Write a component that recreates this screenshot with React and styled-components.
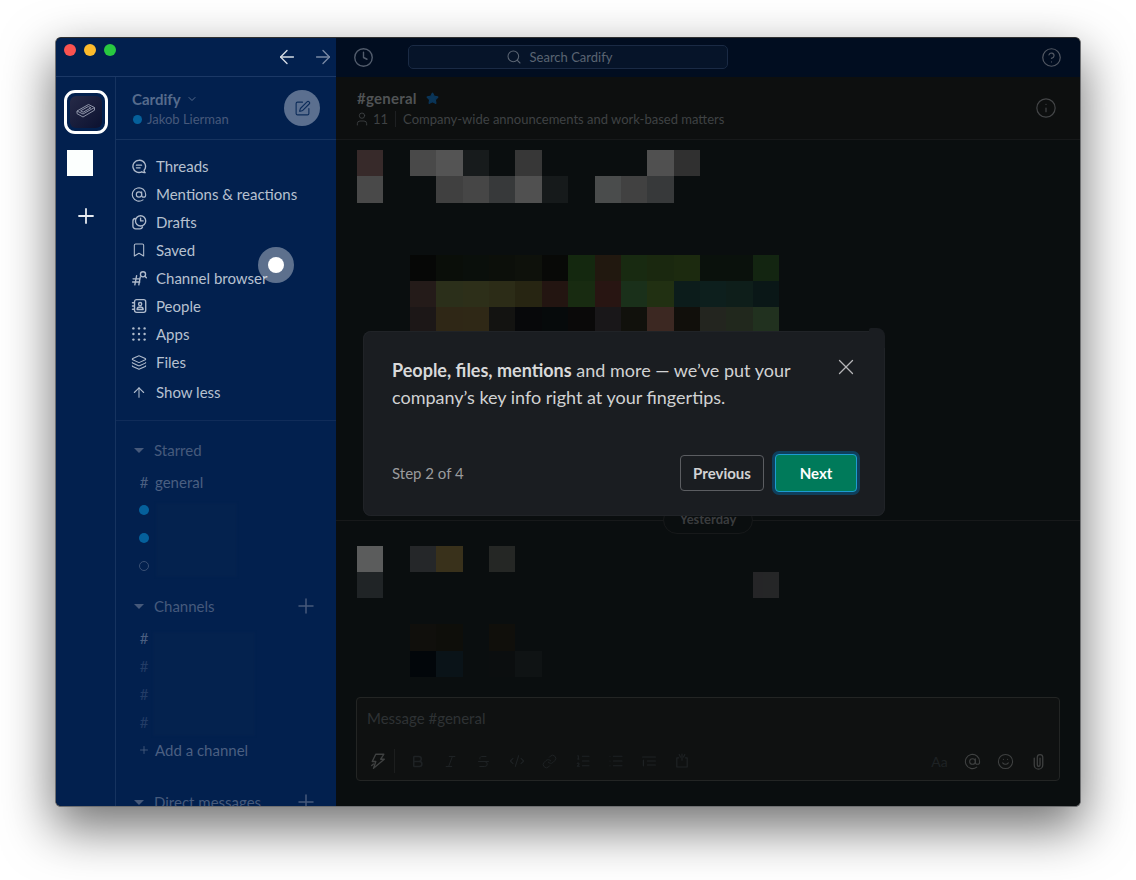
import React from "react";
import styled, { createGlobalStyle } from "styled-components";
import {
  ArrowLeft,
  ArrowRight,
  ArrowUp,
  AtSign,
  Bold,
  Bookmark,
  ChevronDown,
  CircleHelp,
  Clock,
  CodeXml,
  Info,
  Italic,
  Layers,
  Link,
  ListOrdered,
  List,
  Plus,
  Search,
  Smile,
  SquarePen,
  Star,
  Strikethrough,
  User,
  X,
} from "lucide-react";

const GlobalStyle = createGlobalStyle`
  html, body {
    margin: 0;
    background: #ffffff;
  }
  body {
    font-family: Lato, "Open Sans", sans-serif;
    font-feature-settings: "liga", "kern";
  }
`;

function ThreadIcon() {
  return (
    <svg width="17" height="17" viewBox="0 0 20 20" fill="none" stroke="currentColor" strokeWidth="1.7" strokeLinecap="round" strokeLinejoin="round">
      <path d="M10 2.2a7.6 7.6 0 1 0 3.4 14.4c1.1.8 2.5 1.2 4.2 1-.9-.8-1.3-1.8-1.2-3A7.6 7.6 0 0 0 10 2.2z" />
      <path d="M6.8 8.3h6.4M6.8 11.7h4.6" />
    </svg>
  );
}

function DraftsIcon() {
  return (
    <svg width="17" height="17" viewBox="0 0 20 20" fill="none" stroke="currentColor" strokeWidth="1.7" strokeLinecap="round" strokeLinejoin="round">
      <circle cx="12" cy="8" r="6.4" />
      <path d="M12 4.6V8h3.2" />
      <path d="M5.4 5A3.4 3.4 0 0 0 2.4 8.4v6.2a3.4 3.4 0 0 0 3.4 3.4h5.4a3.4 3.4 0 0 0 3.2-2.4" />
    </svg>
  );
}

function BrowserIcon() {
  return (
    <svg width="17" height="17" viewBox="0 0 20 20" fill="none" stroke="currentColor" strokeWidth="1.7" strokeLinecap="round" strokeLinejoin="round">
      <path d="M7 6.5 4.8 18M11.6 8 9.8 18M2.6 10.4h8.2M2 14.4h9" />
      <circle cx="15" cy="4.8" r="3.2" />
      <path d="m17.4 7.2 1.8 1.8" />
    </svg>
  );
}

function PeopleIcon() {
  return (
    <svg width="16" height="16" viewBox="0 0 20 20" fill="none" stroke="currentColor" strokeWidth="1.7" strokeLinecap="round" strokeLinejoin="round">
      <rect x="4.4" y="2" width="14" height="16" rx="2.6" />
      <path d="M1.8 6h2.4M1.8 10h2.4M1.8 14h2.4" />
      <circle cx="11.4" cy="7.6" r="2" />
      <path d="M7.6 14.4c0-2.2 1.6-3.2 3.8-3.2s3.8 1 3.8 3.2z" />
    </svg>
  );
}

function AppsIcon() {
  const spots = [3, 10, 17];
  return (
    <svg width="16" height="16" viewBox="0 0 20 20" fill="currentColor">
      {spots.map((y) =>
        spots.map((x) => <circle key={x + "-" + y} cx={x} cy={y} r="1.5" />)
      )}
    </svg>
  );
}

function BoltIcon() {
  return (
    <svg width="18" height="18" viewBox="0 0 20 20" fill="none" stroke="currentColor" strokeWidth="1.5" strokeLinejoin="round" strokeLinecap="round">
      <path d="M7.5 2.5h9L13 8h4L5 18l2.6-7.4H3.6z" />
      <path d="M3 15l2-1.6" />
    </svg>
  );
}

function IndentIcon() {
  return (
    <svg width="16" height="16" viewBox="0 0 20 20" fill="none" stroke="currentColor" strokeWidth="1.5" strokeLinecap="round">
      <path d="M2 5h16M8 10h10M8 15h10M3 9v7" />
    </svg>
  );
}

function ShortcutIcon() {
  return (
    <svg width="16" height="16" viewBox="0 0 20 20" fill="none" stroke="currentColor" strokeWidth="1.5" strokeLinecap="round" strokeLinejoin="round">
      <path d="M6 6H3.5v11.5h13V6H14" />
      <path d="M10 1.5V9M6.5 2 8 5M13.5 2 12 5" />
    </svg>
  );
}

function ClipIcon() {
  return (
    <svg width="17" height="17" viewBox="0 0 20 20" fill="none" stroke="currentColor" strokeWidth="1.5" strokeLinecap="round">
      <path d="M5 6v8a5 5 0 0 0 10 0V5a3.2 3.2 0 0 0-6.4 0v9a1.6 1.6 0 0 0 3.2 0V6" />
    </svg>
  );
}

function StackLogo() {
  return (
    <svg width="24" height="24" viewBox="0 0 24 24" fill="none" stroke="#8e94a8" strokeWidth="1" strokeLinejoin="round">
      <path d="M3 11 14.5 4.5l6 3L9 14z" />
      <path d="M6.6 10.8 14.3 6.5l2.6 1.3-7.7 4.4z" />
      <path d="M3 11v2.6L9 17l11.5-6.8V7.5" />
    </svg>
  );
}

const Page = styled.div`
  box-sizing: border-box;
  height: 880px;
  padding: 37px 55px;
  overflow: hidden;
`;
const Window = styled.div`
  position: relative;
  box-sizing: border-box;
  display: flex;
  flex-direction: column;
  width: 1026px;
  height: 770px;
  overflow: hidden;
  border: 1px solid #6f7072;
  border-top-color: #303030;
  border-radius: 6px;
  background: #0a0e0f;
  box-shadow: 0 20px 50px 2px rgba(0, 0, 0, 0.55);
`;
const TitleBar = styled.div`
  display: flex;
  flex: 0 0 39px;
`;
const TitleLeft = styled.div`
  box-sizing: border-box;
  display: flex;
  align-items: center;
  width: 280px;
  padding: 0 2px 1px 8px;
  background: #02204e;
  border-bottom: 1px solid #1b3866;
`;
const Lights = styled.div`
  display: flex;
  gap: 8px;
  align-self: flex-start;
  margin-top: 6px;
`;
const Light = styled.span`
  width: 12px;
  height: 12px;
  border-radius: 50%;
  background: ${(p) => p.$color};
`;
const HistoryNav = styled.div`
  display: flex;
  gap: 14px;
  margin-left: auto;
`;
const NavArrow = styled.span`
  display: flex;
  color: ${(p) => (p.$dim ? "#7888a4" : "#d5dbe4")};
`;
const TitleRight = styled.div`
  box-sizing: border-box;
  display: flex;
  flex: 1;
  align-items: center;
  padding: 0 18px 1px 17px;
  background: #010d20;
  color: #525c6c;
`;
const SearchBox = styled.div`
  box-sizing: border-box;
  display: flex;
  align-items: center;
  justify-content: center;
  gap: 8px;
  width: 320px;
  height: 24px;
  margin-left: 34px;
  padding-right: 18px;
  border: 1px solid #1a2a44;
  border-radius: 5px;
  background: #061429;
  color: #5a6472;
  font-size: 13px;
`;
const HelpButton = styled.span`
  display: flex;
  margin-left: auto;
  color: #515762;
`;
const Body = styled.div`
  display: flex;
  flex: 1;
  min-height: 0;
`;
const Rail = styled.div`
  box-sizing: border-box;
  display: flex;
  flex-direction: column;
  align-items: flex-start;
  width: 60px;
  padding: 13px 0 0 8px;
  background: #02204e;
  border-right: 1px solid #16335f;
`;
const WorkspaceRing = styled.div`
  box-sizing: border-box;
  display: flex;
  align-items: center;
  justify-content: center;
  width: 44px;
  height: 44px;
  border: 3px solid #fdfeff;
  border-radius: 11px;
`;
const WorkspaceIcon = styled.div`
  display: flex;
  align-items: center;
  justify-content: center;
  width: 32px;
  height: 32px;
  border-radius: 6px;
  background: linear-gradient(135deg, #262a47, #0b1130);
`;
const WorkspaceBlank = styled.div`
  width: 26px;
  height: 26px;
  margin: 16px 0 0 3px;
  background: #fcfffe;
`;
const AddWorkspace = styled.span`
  display: flex;
  margin: 28px 0 0 10px;
  color: #e6eaf0;
`;
const Sidebar = styled.div`
  display: flex;
  flex-direction: column;
  width: 220px;
  overflow: hidden;
  background: #02204e;
`;
const SidebarHead = styled.div`
  box-sizing: border-box;
  display: flex;
  flex: 0 0 63px;
  align-items: center;
  justify-content: space-between;
  padding: 0 16px;
  border-bottom: 1px solid #16335f;
`;
const HeadText = styled.div`
  padding-top: 2px;
`;
const TeamName = styled.div`
  display: flex;
  align-items: center;
  gap: 5px;
  color: #566b8c;
  font-size: 15px;
  font-weight: 700;
  line-height: 20px;
`;
const UserLine = styled.div`
  display: flex;
  align-items: center;
  gap: 5px;
  padding-left: 1px;
  color: #47597b;
  font-size: 13px;
  line-height: 20px;
`;
const Presence = styled.span`
  box-sizing: border-box;
  width: ${(p) => p.$size || 9}px;
  height: ${(p) => p.$size || 9}px;
  border-radius: 50%;
  background: ${(p) => (p.$away ? "transparent" : "#05609b")};
  border: ${(p) => (p.$away ? "1.5px solid #3a5074" : "none")};
`;
const ComposeButton = styled.span`
  display: flex;
  align-items: center;
  justify-content: center;
  width: 36px;
  height: 36px;
  border-radius: 50%;
  background: #5b6f8f;
  color: #0c2c5a;
`;
const NavList = styled.div`
  flex: 0 0 auto;
  padding: 12px 0 14px;
  border-bottom: 1px solid #102c59;
`;
const NavItem = styled.div`
  display: flex;
  align-items: center;
  gap: 9px;
  height: 28px;
  margin-top: ${(p) => (p.$gap ? "2px" : "0")};
  padding-left: 15px;
  color: #b7c1d0;
  font-size: 15px;
`;
const NavGlyph = styled.span`
  display: flex;
  justify-content: center;
  width: 16px;
  color: #b0bbcc;
`;
const Section = styled.div`
  margin-top: ${(p) => p.$top}px;
`;
const SectionHead = styled.div`
  display: flex;
  align-items: center;
  height: 28px;
  margin-bottom: 4px;
  padding: 0 18px 0 18px;
  color: #465a7c;
  font-size: 15px;
`;
const Caret = styled.span`
  width: 0;
  height: 0;
  margin-right: 10px;
  border-top: 5px solid #46597a;
  border-left: 5px solid transparent;
  border-right: 5px solid transparent;
`;
const SectionAdd = styled.span`
  display: flex;
  margin-left: auto;
  color: #47597b;
`;
const Rows = styled.div`
  position: relative;
`;
const Row = styled.div`
  display: flex;
  align-items: center;
  height: 28px;
  color: ${(p) => (p.$faint ? "#223c66" : "#4b5f81")};
  font-size: 15px;
`;
const RowMark = styled.span`
  display: flex;
  align-items: center;
  justify-content: center;
  width: 12px;
  margin: 0 5px 0 22px;
`;
const Redacted = styled.div`
  position: absolute;
  left: ${(p) => p.$left}px;
  top: ${(p) => p.$top}px;
  width: ${(p) => p.$w}px;
  height: ${(p) => p.$h}px;
  background: #04224e;
  filter: blur(1px);
`;
const CursorRing = styled.div`
  position: absolute;
  left: 202px;
  top: 209px;
  display: flex;
  align-items: center;
  justify-content: center;
  width: 36px;
  height: 36px;
  border-radius: 50%;
  background: rgba(255, 255, 255, 0.36);
  &::after {
    content: "";
    width: 16px;
    height: 16px;
    border-radius: 50%;
    background: #ffffff;
  }
`;
const Main = styled.div`
  display: flex;
  flex: 1;
  flex-direction: column;
  min-width: 0;
  background: #0a0e0f;
`;
const ChannelHead = styled.div`
  box-sizing: border-box;
  display: flex;
  flex: 0 0 63px;
  align-items: center;
  justify-content: space-between;
  padding: 0 23px 0 21px;
  background: #0d0f0f;
  border-bottom: 1px solid #17191a;
`;
const ChannelName = styled.div`
  display: flex;
  align-items: center;
  gap: 9px;
  margin: -1px 0 1px;
  color: #505355;
  font-size: 15px;
  font-weight: 700;
  letter-spacing: 0.25px;
  line-height: 20px;
`;
const ChannelMeta = styled.div`
  display: flex;
  align-items: center;
  color: #3f4244;
  font-size: 13px;
  line-height: 20px;
`;
const MetaCount = styled.span`
  display: flex;
  align-items: center;
  gap: 3px;
  margin: 0 7px 0 -3px;
  padding-right: 7px;
  border-right: 1px solid #1e2022;
  line-height: 13px;
`;
const InfoButton = styled.span`
  display: flex;
  color: #434547;
`;
const Messages = styled.div`
  flex: 1;
  min-height: 0;
  overflow: hidden;
`;
const Mosaic = styled.div`
  display: grid;
  grid-template-columns: repeat(16, 26.4px);
  grid-auto-rows: 26.33px;
  margin: ${(p) => p.$top}px 0 0 21px;
  opacity: ${(p) => p.$dim || 1};
`;
const Pixel = styled.div`
  background: ${(p) => p.$tone};
`;
const DayDivider = styled.div`
  position: relative;
  display: flex;
  align-items: center;
  justify-content: center;
  height: 28px;
  margin-top: 172px;
  &::before {
    content: "";
    position: absolute;
    left: 0;
    right: 0;
    top: 14px;
    border-top: 1px solid #17191a;
  }
`;
const DayPill = styled.span`
  position: relative;
  box-sizing: border-box;
  width: 90px;
  height: 28px;
  border: 1px solid #17191a;
  border-radius: 14px;
  background: #0a0e0f;
  color: #3a3c3e;
  font-size: 13px;
  font-weight: 700;
  line-height: 24px;
  text-align: center;
`;
const Composer = styled.div`
  box-sizing: border-box;
  display: flex;
  flex: 0 0 84px;
  flex-direction: column;
  justify-content: space-between;
  margin: 0 20px 25px;
  padding: 10px 4px 3px 10px;
  border: 1px solid #232524;
  border-radius: 4px;
  background: #0f1111;
`;
const Placeholder = styled.div`
  color: #2e3234;
  font-size: 15px;
  line-height: 20px;
`;
const Toolbar = styled.div`
  display: flex;
  align-items: center;
  height: 32px;
  margin-left: -6px;
`;
const ToolButton = styled.span`
  display: flex;
  align-items: center;
  justify-content: center;
  width: 33px;
  color: ${(p) => (p.$lit ? "#3f4141" : "#1e2224")};
  font-size: 14px;
`;
const ToolDivider = styled.span`
  width: 1px;
  height: 24px;
  margin: 0 6px 0 0;
  background: #1c1e1e;
`;
const ToolSpacer = styled.span`
  flex: 1;
`;
const Tour = styled.div`
  position: absolute;
  left: 307px;
  top: 293px;
  box-sizing: border-box;
  display: flex;
  flex-direction: column;
  justify-content: space-between;
  width: 522px;
  height: 185px;
  padding: 26px 28px 24px 29px;
  border-radius: 8px;
  background: #1a1d21;
  box-shadow: inset 0 0 0 1px #202327;
  &::before {
    content: "";
    position: absolute;
    right: 0;
    top: -3px;
    width: 16px;
    height: 20px;
    border-radius: 2px 8px 0 0;
    background: #1a1d21;
  }
`;
const TourTop = styled.div`
  position: relative;
  display: flex;
  justify-content: space-between;
  align-items: flex-start;
  color: #d1d2d3;
  font-size: 18px;
  line-height: 27px;
  strong {
    color: #d8d9da;
    font-weight: 700;
  }
`;
const TourClose = styled.span`
  display: flex;
  margin: -3px -2px 0 0;
  color: #b5b6b8;
`;
const TourBottom = styled.div`
  display: flex;
  align-items: center;
  justify-content: space-between;
`;
const StepLabel = styled.span`
  color: #9a9b9d;
  font-size: 15px;
`;
const TourActions = styled.div`
  display: flex;
  align-items: center;
  gap: 11px;
`;
const TourButton = styled.button`
  box-sizing: border-box;
  height: ${(p) => (p.$primary ? "38px" : "36px")};
  width: ${(p) => (p.$primary ? "82px" : "84px")};
  padding: 0;
  border: 1px solid ${(p) => (p.$primary ? "#1d9bd1" : "#5b5d61")};
  border-radius: 4px;
  background: ${(p) => (p.$primary ? "#007a5a" : "transparent")};
  box-shadow: ${(p) => (p.$primary ? "0 0 0 3px #0f3f5c" : "none")};
  color: ${(p) => (p.$primary ? "#ffffff" : "#d1d2d3")};
  font-family: Lato, sans-serif;
  font-size: 15px;
  font-weight: 700;
`;

const row = (start, tones) => [...Array(start).fill(null), ...tones];

const BLOCK_ONE = [
  ["#3a2c2c", null, "#4d4d4d", "#595959", "#181c1d", null, "#3a3a3a", null, null, null, null, "#555555", "#333333"],
  ["#4d4d4d", null, null, "#444444", "#4a4a4a", "#3a3c3d", "#555555", "#171b1c", null, "#4e5050", "#454545", "#3a3c3d"],
];
const BLOCK_TWO = [
  row(2, ["#060604", "#0a0f08", "#0b100a", "#0d1009", "#10130a", "#080806", "#17300f", "#281c10", "#1d3212", "#1f3010", "#223210", "#0a130c", "#0a120c", "#162c12"]),
  row(2, ["#2c1f1c", "#35391e", "#37391c", "#36351a", "#302c14", "#2a1812", "#1c3412", "#311814", "#1f3a1e", "#283a14", "#0d201f", "#0e2522", "#10231e", "#0a1a1a"]),
  row(2, ["#221a1a", "#3a2e18", "#3a3018", "#161512", "#070709", "#060a0b", "#0a0808", "#1e1a1c", "#13130c", "#4a3028", "#14100a", "#2a2c24", "#283022", "#283c24"]),
];
const BLOCK_THREE = [
  ["#6a6a6a", null, "#2a2c2e", "#42381e", null, "#2a2c2a"],
  ["#25292b", ...Array(14).fill(null), "#2a2a2c"],
];
const BLOCK_FOUR = [
  row(2, ["#100f0c", "#0e0e0a", null, "#100f0b"]),
  row(2, ["#02060a", "#0a1318", null, "#0b0e0f", "#0f1314"]),
];

const NAV = [
  { label: "Threads", icon: <ThreadIcon /> },
  { label: "Mentions & reactions", icon: <AtSign size={17} strokeWidth={1.7} /> },
  { label: "Drafts", icon: <DraftsIcon /> },
  { label: "Saved", icon: <Bookmark size={18} strokeWidth={1.6} /> },
  { label: "Channel browser", icon: <BrowserIcon /> },
  { label: "People", icon: <PeopleIcon /> },
  { label: "Apps", icon: <AppsIcon /> },
  { label: "Files", icon: <Layers size={17} strokeWidth={1.6} /> },
];

function PixelBlock({ rows, top, dim }) {
  return (
    <Mosaic $top={top} $dim={dim}>
      {rows.map((tones, y) =>
        Array.from({ length: 16 }, (_, x) =>
          tones[x] ? (
            <Pixel key={y + "-" + x} $tone={tones[x]} />
          ) : (
            <div key={y + "-" + x} />
          )
        )
      )}
    </Mosaic>
  );
}

export default function App() {
  return (
    <Page>
      <GlobalStyle />
      <Window>
        <TitleBar>
          <TitleLeft>
            <Lights>
              <Light $color="#fa5350" />
              <Light $color="#fdbb2c" />
              <Light $color="#29c940" />
            </Lights>
            <HistoryNav>
              <NavArrow>
                <ArrowLeft size={22} strokeWidth={1.5} />
              </NavArrow>
              <NavArrow $dim>
                <ArrowRight size={22} strokeWidth={1.5} />
              </NavArrow>
            </HistoryNav>
          </TitleLeft>
          <TitleRight>
            <Clock size={21} strokeWidth={1.6} />
            <SearchBox>
              <Search size={16} strokeWidth={1.6} />
              <span>Search Cardify</span>
            </SearchBox>
            <HelpButton>
              <CircleHelp size={21} strokeWidth={1.4} />
            </HelpButton>
          </TitleRight>
        </TitleBar>
        <Body>
          <Rail>
            <WorkspaceRing>
              <WorkspaceIcon>
                <StackLogo />
              </WorkspaceIcon>
            </WorkspaceRing>
            <WorkspaceBlank />
            <AddWorkspace>
              <Plus size={24} strokeWidth={1.8} />
            </AddWorkspace>
          </Rail>
          <Sidebar>
            <SidebarHead>
              <HeadText>
                <TeamName>
                  Cardify
                  <ChevronDown size={12} strokeWidth={2} />
                </TeamName>
                <UserLine>
                  <Presence />
                  Jakob Lierman
                </UserLine>
              </HeadText>
              <ComposeButton>
                <SquarePen size={17} strokeWidth={1.6} />
              </ComposeButton>
            </SidebarHead>
            <NavList>
              {NAV.map((item) => (
                <NavItem key={item.label}>
                  <NavGlyph>{item.icon}</NavGlyph>
                  {item.label}
                </NavItem>
              ))}
              <NavItem $gap>
                <NavGlyph>
                  <ArrowUp size={17} strokeWidth={1.6} />
                </NavGlyph>
                Show less
              </NavItem>
            </NavList>
            <Section $top={15}>
              <SectionHead>
                <Caret />
                Starred
              </SectionHead>
              <Rows>
                <Row>
                  <RowMark>#</RowMark>
                  general
                </Row>
                <Row>
                  <RowMark>
                    <Presence $size={10} />
                  </RowMark>
                </Row>
                <Row>
                  <RowMark>
                    <Presence $size={10} />
                  </RowMark>
                </Row>
                <Row>
                  <RowMark>
                    <Presence $away $size={10} />
                  </RowMark>
                </Row>
                <Redacted $left={40} $top={35} $w={81} $h={74} />
              </Rows>
            </Section>
            <Section $top={12}>
              <SectionHead>
                <Caret />
                Channels
                <SectionAdd>
                  <Plus size={24} strokeWidth={1.5} />
                </SectionAdd>
              </SectionHead>
              <Rows>
                <Row>
                  <RowMark>#</RowMark>
                </Row>
                <Row $faint>
                  <RowMark>#</RowMark>
                </Row>
                <Row $faint>
                  <RowMark>#</RowMark>
                </Row>
                <Row $faint>
                  <RowMark>#</RowMark>
                </Row>
                <Redacted $left={37} $top={8} $w={102} $h={104} />
              </Rows>
              <Row>
                <RowMark>
                  <Plus size={14} strokeWidth={1.6} />
                </RowMark>
                Add a channel
              </Row>
            </Section>
            <Section $top={24}>
              <SectionHead>
                <Caret />
                Direct messages
                <SectionAdd>
                  <Plus size={24} strokeWidth={1.5} />
                </SectionAdd>
              </SectionHead>
            </Section>
          </Sidebar>
          <Main>
            <ChannelHead>
              <HeadText>
                <ChannelName>
                  #general
                  <Star size={13} fill="#0a3558" color="#0a3558" />
                </ChannelName>
                <ChannelMeta>
                  <MetaCount>
                    <User size={16} strokeWidth={1.3} />
                    11
                  </MetaCount>
                  Company-wide announcements and work-based matters
                </ChannelMeta>
              </HeadText>
              <InfoButton>
                <Info size={22} strokeWidth={1.3} />
              </InfoButton>
            </ChannelHead>
            <Messages>
              <PixelBlock rows={BLOCK_ONE} top={10} dim={0.94} />
              <PixelBlock rows={BLOCK_TWO} top={52} dim={0.78} />
              <DayDivider>
                <DayPill>Yesterday</DayPill>
              </DayDivider>
              <PixelBlock rows={BLOCK_THREE} top={12} dim={0.85} />
              <PixelBlock rows={BLOCK_FOUR} top={26} />
            </Messages>
            <Composer>
              <Placeholder>Message #general</Placeholder>
              <Toolbar>
                <ToolButton $lit>
                  <BoltIcon />
                </ToolButton>
                <ToolDivider />
                <ToolButton>
                  <Bold size={15} strokeWidth={2.4} />
                </ToolButton>
                <ToolButton>
                  <Italic size={15} strokeWidth={1.6} />
                </ToolButton>
                <ToolButton>
                  <Strikethrough size={15} strokeWidth={1.6} />
                </ToolButton>
                <ToolButton>
                  <CodeXml size={16} strokeWidth={1.6} />
                </ToolButton>
                <ToolButton>
                  <Link size={15} strokeWidth={1.6} />
                </ToolButton>
                <ToolButton>
                  <ListOrdered size={16} strokeWidth={1.6} />
                </ToolButton>
                <ToolButton>
                  <List size={16} strokeWidth={1.6} />
                </ToolButton>
                <ToolButton>
                  <IndentIcon />
                </ToolButton>
                <ToolButton>
                  <ShortcutIcon />
                </ToolButton>
                <ToolSpacer />
                <ToolButton>Aa</ToolButton>
                <ToolButton $lit>
                  <AtSign size={17} strokeWidth={1.5} />
                </ToolButton>
                <ToolButton $lit>
                  <Smile size={17} strokeWidth={1.5} />
                </ToolButton>
                <ToolButton $lit>
                  <ClipIcon />
                </ToolButton>
              </Toolbar>
            </Composer>
          </Main>
        </Body>
        <CursorRing />
        <Tour>
          <TourTop>
            <div>
              <strong>People, files, mentions</strong> and more — we’ve put your
              <br />
              company’s key info right at your fingertips.
            </div>
            <TourClose>
              <X size={26} strokeWidth={1.2} />
            </TourClose>
          </TourTop>
          <TourBottom>
            <StepLabel>Step 2 of 4</StepLabel>
            <TourActions>
              <TourButton>Previous</TourButton>
              <TourButton $primary>Next</TourButton>
            </TourActions>
          </TourBottom>
        </Tour>
      </Window>
    </Page>
  );
}
